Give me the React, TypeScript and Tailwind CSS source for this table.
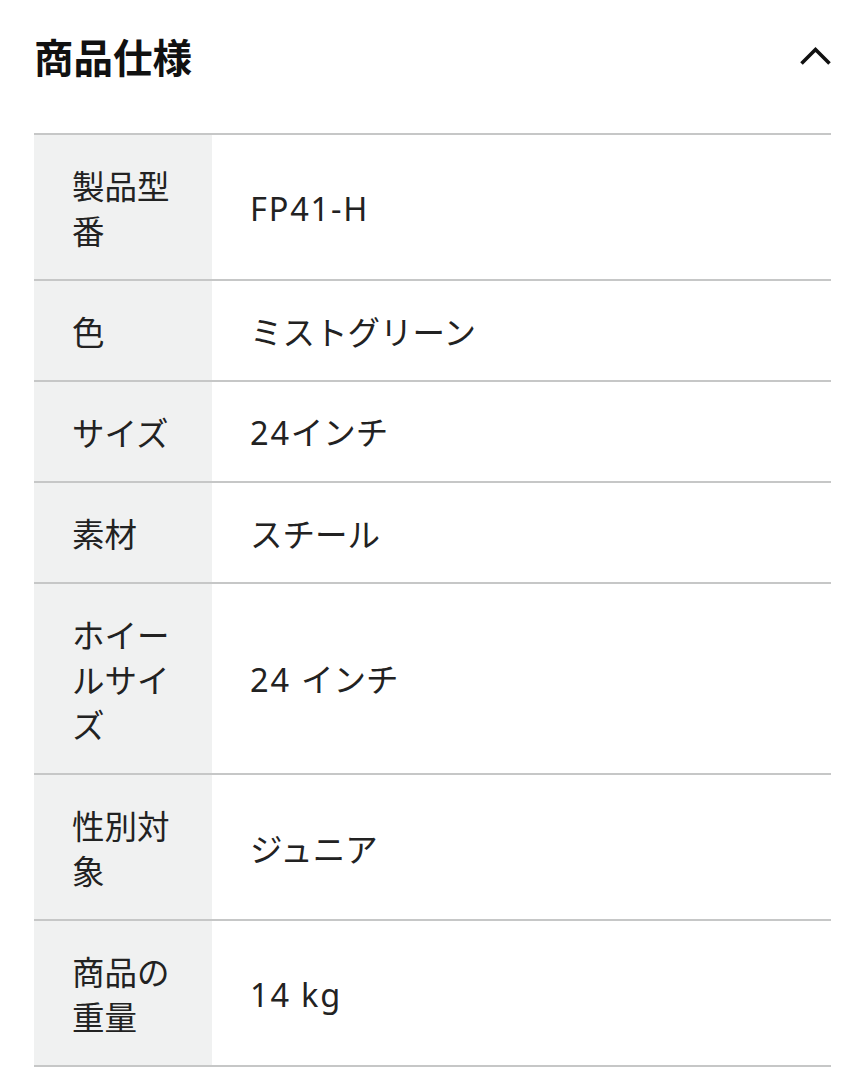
import React from "react";

const rows: { label: string; value: string }[] = [
  { label: "製品型番", value: "FP41-H" },
  { label: "色", value: "ミストグリーン" },
  { label: "サイズ", value: "24インチ" },
  { label: "素材", value: "スチール" },
  { label: "ホイールサイズ", value: "24 インチ" },
  { label: "性別対象", value: "ジュニア" },
  { label: "商品の重量", value: "14 kg" },
];

function Value({ text }: { text: string }) {
  const parts = text.split(/([A-Za-z0-9\- ]+)/).filter((p) => p.length > 0);
  return (
    <>
      {parts.map((p, i) =>
        /^[A-Za-z0-9\- ]+$/.test(p) ? (
          <span
            key={i}
            className="tracking-[1.8px]"
            style={{ fontFamily: '"Noto Sans", "Noto Sans CJK JP", sans-serif' }}
          >
            {p}
          </span>
        ) : (
          <span key={i}>{p}</span>
        )
      )}
    </>
  );
}

export default function App() {
  return (
    <div
      className="w-[865px] min-h-[1080px] bg-white text-[#222]"
      style={{ fontFamily: '"Noto Sans CJK JP", "Noto Sans", sans-serif' }}
    >
      <div className="px-[34px] pt-[32px] flex items-center justify-between">
        <h2 className="text-[39.5px] leading-[48px] font-bold text-[#111]">商品仕様</h2>
        <svg width="33" height="20" viewBox="0 0 33 20" className="mr-[-1px]">
          <polyline
            points="2.5,17.5 16.5,3.5 30.5,17.5"
            fill="none"
            stroke="#111"
            strokeWidth="3.6"
            strokeLinecap="butt"
            strokeLinejoin="miter"
          />
        </svg>
      </div>
      <div className="mx-[34px] mt-[53px] border-t-2 border-[#c6c7c7]">
        {rows.map((r) => (
          <div key={r.label} className="flex border-b-2 border-[#c6c7c7]">
            <div className="w-[178px] shrink-0 bg-[#f0f1f1] pl-[38px] pr-[30px] py-[27px] text-[32.5px] leading-[45px] break-all">
              {r.label}
            </div>
            <div className="flex-1 flex items-center px-[38px] text-[32.5px] leading-[45px]">
              <div>
                <Value text={r.value} />
              </div>
            </div>
          </div>
        ))}
      </div>
    </div>
  );
}
